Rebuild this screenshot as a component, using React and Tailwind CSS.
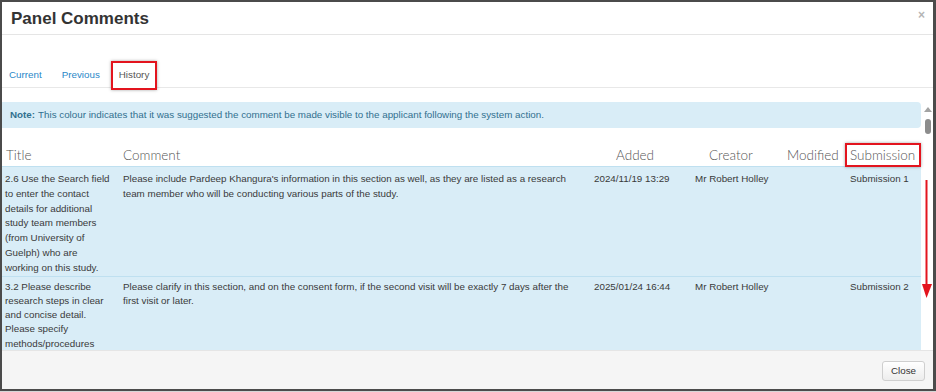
import React from "react";

const rows = [
  {
    title:
      "2.6 Use the Search field to enter the contact details for additional study team members (from University of Guelph) who are working on this study.",
    comment:
      "Please include Pardeep Khangura's information in this section as well, as they are listed as a research team member who will be conducting various parts of the study.",
    added: "2024/11/19 13:29",
    creator: "Mr Robert Holley",
    modified: "",
    submission: "Submission 1",
  },
  {
    title:
      "3.2 Please describe research steps in clear and concise detail. Please specify methods/procedures",
    comment:
      "Please clarify in this section, and on the consent form, if the second visit will be exactly 7 days after the first visit or later.",
    added: "2025/01/24 16:44",
    creator: "Mr Robert Holley",
    modified: "",
    submission: "Submission 2",
  },
];

const cols = "grid grid-cols-[116px_472px_100px_92px_63px_76px]";

const App = () => {
  return (
    <div className="w-[936px] h-[392px] bg-[#d6d6d6] font-['Liberation_Sans',Arial,sans-serif]">
      <div className="w-[936px] h-[391px] bg-white border-l-2 border-r-[3px] border-t-2 border-b-2 border-[#4b4b4b] flex flex-col">
        {/* Header */}
        <div className="h-[33px] shrink-0 border-b border-[#e5e5e5] flex items-center justify-between pl-[9px] pr-[8px]">
          <h1 className="text-[17px] font-bold text-[#333] leading-none">
            Panel Comments
          </h1>
          <span className="text-[12px] font-bold text-[#b5b5b5] leading-none -mt-[7px]">×</span>
        </div>

        {/* Tabs */}
        <div className="h-[53px] shrink-0 border-b border-[#e8e8e8] flex items-end text-[9.8px]">
          <div className="flex items-center h-[29px] -mb-[3px] pb-[1px] ml-[7px] text-[#2a88c8]">
            Current
          </div>
          <div className="flex items-center h-[29px] -mb-[3px] pb-[1px] ml-[20px] text-[#2a88c8]">
            Previous
          </div>
          <div className="flex items-center h-[29px] -mb-[3px] pb-[1px] ml-[11px] px-[6px] border-2 border-[#e3141e] bg-white text-[#555] shadow-[0_0_3px_rgba(0,0,0,0.35)] relative z-10">
            History
          </div>
        </div>

        {/* Scroll area */}
        <div className="mt-[12px] h-[250px] shrink-0 flex overflow-hidden">
          <div className="w-[919px] shrink-0 pt-[2px]">
            <div className="h-[26px] bg-[#d9edf7] rounded-r-[4px] flex items-center pl-[8px] text-[9.8px] text-[#31708f]">
              <span className="font-bold mr-[3px]">Note:</span>
              This colour indicates that it was suggested the comment be made visible to the applicant following the system action.
            </div>

            <div className={`${cols} mt-[12px] h-[27px] items-end border-b border-[#bfe0f0] font-['Lato','Open_Sans',sans-serif] font-light text-[13.5px] text-[#555]`}>
              <div className="pl-[4px] pb-[1px]">Title</div>
              <div className="pl-[5px] pb-[1px]">Comment</div>
              <div className="pl-[26px] pb-[1px]">Added</div>
              <div className="pl-[19px] pb-[1px]">Creator</div>
              <div className="pl-[5px] pb-[1px]">Modified</div>
              <div className="h-[24px] flex items-center pl-[3px] pt-[1px] border-2 border-[#e3141e] -mb-[1px] shadow-[0_0_3px_rgba(0,0,0,0.35)] relative z-10">
                Submission
              </div>
            </div>

            {rows.map((r, i) => {
              const pt = i > 0 ? "pt-[3px]" : "pt-[5px]";
              return (
                <div
                  key={i}
                  className={`${cols} bg-[#d9edf7] text-[9.8px] text-[#3a3a3a] ${i > 0 ? "border-t border-[#bfe0f0] leading-[14.3px] pb-[4px]" : "leading-[14.8px]"}`}
                >
                  <div className={`pl-[3px] pr-[6px] ${pt}`}>{r.title}</div>
                  <div className={`pl-[5px] pr-[14px] ${pt}`}>{r.comment}</div>
                  <div className={`pl-[4px] ${pt}`}>{r.added}</div>
                  <div className={`pl-[5px] ${pt}`}>{r.creator}</div>
                  <div className={`pl-[4px] ${pt}`}>{r.modified}</div>
                  <div className={`pl-[5px] ${pt}`}>{r.submission}</div>
                </div>
              );
            })}
          </div>

          {/* Scrollbar */}
          <div className="w-[12px] shrink-0 relative bg-white">
            <div className="flex justify-center pt-[7px] pl-[1px]">
              <svg width="8" height="5" viewBox="0 0 8 5">
                <polygon points="0,5 8,5 4,0" fill="#a3a3a3" />
              </svg>
            </div>
            <div className="mt-[7px] ml-[4px] w-[6px] h-[15px] rounded-full bg-[#8c8c8c]" />
            <svg
              className="absolute left-0 top-[80px]"
              width="12"
              height="120"
              viewBox="0 0 12 120"
            >
              <line x1="5.5" y1="0" x2="5.5" y2="108" stroke="#e3141e" strokeWidth="2" />
              <polygon points="1,104 11,104 5.5,118" fill="#e3141e" />
            </svg>
          </div>
        </div>

        {/* Footer */}
        <div className="flex-1 border-t border-[#e5e5e5] bg-[#f5f5f5] flex items-center justify-end pr-[8px]">
          <button className="h-[20px] px-[8px] mt-[2px] text-[9.8px] text-[#333] border border-[#cfcfcf] rounded-[3px] bg-gradient-to-b from-white to-[#ededed]">
            Close
          </button>
        </div>
      </div>
    </div>
  );
};

export default App;
